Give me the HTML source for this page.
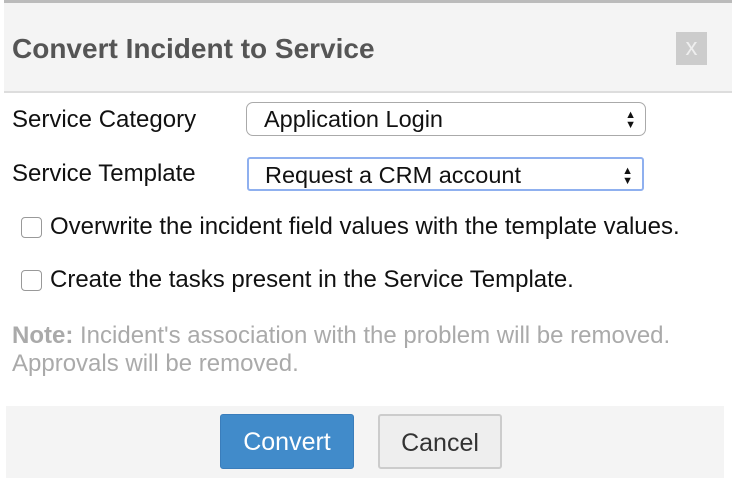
<!DOCTYPE html><html><head><style>
body{margin:0;width:732px;height:486px;background:#fff;font-family:"Liberation Sans",sans-serif;position:relative;overflow:hidden}
.a{position:absolute;white-space:nowrap}
.hdr{left:4px;top:0;width:728px;height:88px;background:#f4f4f4;border-bottom:2px solid #ddd;border-top:3px solid #bbb}
.t{left:12px;top:33px;font-size:28px;font-weight:bold;color:#555}
.x{left:676px;top:32px;width:31px;height:33px;background:#ccc;color:#eee;font-size:24px;text-align:center;line-height:32px}
.l{font-size:24px;color:#111}
.sel{height:34px;border:1px solid #aaa;border-radius:7px;font-size:23.5px;line-height:33px;padding-left:17px;box-sizing:border-box;color:#111;background:#fff}
.arr{position:absolute;right:9px;top:7px;font-size:11px;line-height:10px}
.cb{width:21px;height:21px;border:1px solid #999;border-radius:4px;background:#fff;box-sizing:border-box}
.n{left:12px;font-size:24px;color:#aaa}
.ftr{left:6px;top:406px;width:718px;height:72px;background:#f4f4f4}
.btn{top:414px;height:55px;border-radius:3px;font-size:25px;line-height:55px;text-align:center;box-sizing:border-box}
</style></head><body>
<div class="a hdr"></div>
<div class="a t">Convert Incident to Service</div>
<div class="a x">x</div>
<div class="a l" style="left:12px;top:106px">Service Category</div>
<div class="a sel" style="left:246px;top:102px;width:400px">Application Login<div class="arr">▲<br>▼</div></div>
<div class="a l" style="left:12px;top:160px">Service Template</div>
<div class="a sel" style="left:247px;top:157px;width:397px;border:2px solid #8fb0ef;border-radius:3px;padding-left:16px">Request a CRM account<div class="arr">▲<br>▼</div></div>
<div class="a cb" style="left:21px;top:217px"></div>
<div class="a l" style="left:50px;top:213px">Overwrite the incident field values with the template values.</div>
<div class="a cb" style="left:21px;top:270px"></div>
<div class="a l" style="left:50px;top:266px">Create the tasks present in the Service Template.</div>
<div class="a n" style="top:322px"><b>Note:</b> Incident's association with the problem will be removed.</div>
<div class="a n" style="top:350px">Approvals will be removed.</div>
<div class="a ftr"></div>
<div class="a btn" style="left:220px;width:134px;background:#418bca;color:#fff;border:1px solid #3a7dbb">Convert</div>
<div class="a btn" style="left:378px;width:124px;background:#eee;color:#333;border:2px solid #ccc">Cancel</div>
</body></html>
